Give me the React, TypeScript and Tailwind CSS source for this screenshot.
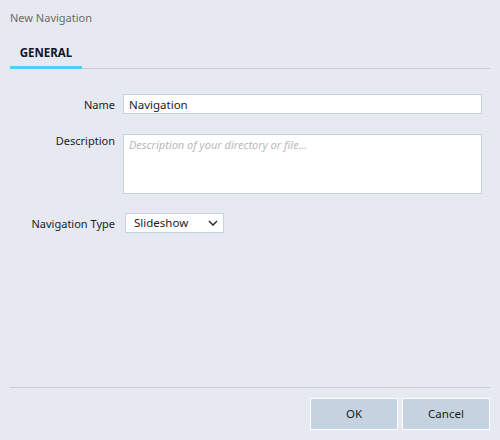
export default function App() {
  return (
    <div className="h-[440px] w-[500px] bg-[#e6e9f1] flex flex-col px-[10px] text-[11px] text-[#1b1b1b]" style={{ fontFamily: '"Noto Sans", sans-serif' }}>
      <div className="pt-[9px] h-[30px] leading-[18px] text-[#6b6b6b]">New Navigation</div>
      <div className="mt-[14px] border-b border-[#c9ccd2] flex">
        <div className="w-[72px] text-center h-[25px] leading-[17px] font-bold text-[11.5px] text-[#101828] border-b-[3px] border-[#4dd2f6] -mb-px">GENERAL</div>
      </div>

      <div className="mt-[25px] grid grid-cols-[105px_1fr] gap-x-[8px] pr-[8px]">
        <label className="text-right leading-[20px] pt-[1px]">Name</label>
        <input
          className="h-[20px] bg-white border border-[#c5d1de] px-[5px] text-[11.5px] outline-none"
          defaultValue="Navigation"
        />

        <label className="text-right leading-[14px] mt-[19px]">Description</label>
        <textarea
          className="mt-[19px] h-[60px] bg-white border border-[#c5d1de] px-[5px] py-[2px] resize-none italic text-[11px] outline-none placeholder:text-[#b9b9b9]"
          placeholder="Description of your directory or file..."
        />

        <label className="text-right leading-[20px] mt-[19px] pt-[1px]">Navigation Type</label>
        <div className="mt-[19px]">
          <div className="ml-[2px] w-[99px] h-[20px] bg-white border border-[#c5d1de] flex items-center justify-between pl-[8px] pr-[5px] text-[11.5px]">
            <span>Slideshow</span>
            <svg width="10" height="6" viewBox="0 0 10 6" fill="none">
              <path d="M1 1l4 4 4-4" stroke="#333" strokeWidth="1.6" />
            </svg>
          </div>
        </div>
      </div>

      <div className="flex-1" />

      <div className="border-t border-[#c9ccd2] pt-[10px] pb-[10px] flex justify-end gap-[4px]">
        <button className="w-[88px] h-[32px] bg-[#c5d3e0] border border-white text-[#1b1b1b] text-[11.5px]">OK</button>
        <button className="w-[88px] h-[32px] bg-[#c5d3e0] border border-white text-[#1b1b1b] text-[11.5px]">Cancel</button>
      </div>
    </div>
  )
}
